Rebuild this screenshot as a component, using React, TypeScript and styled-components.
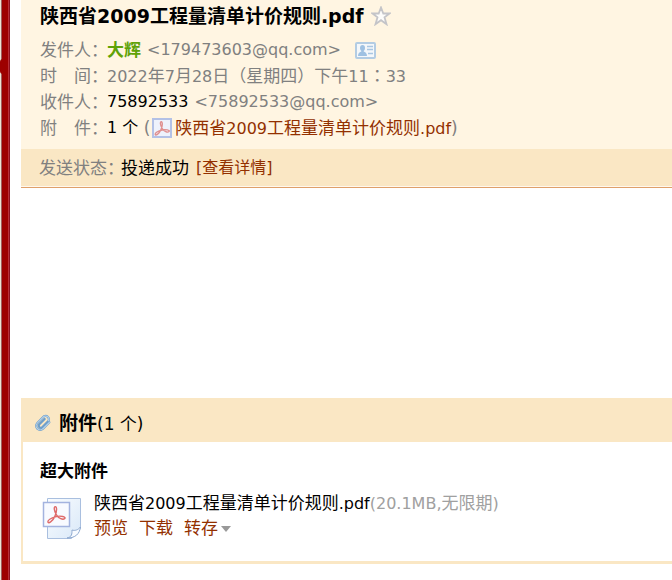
import React from "react";
import styled, { createGlobalStyle } from "styled-components";

const GlobalStyle = createGlobalStyle`
  * { box-sizing: border-box; }
  body {
    margin: 0;
    background: #fff;
    color: #000;
    font: 17px/26px "DejaVu Sans", "Noto Sans CJK SC", sans-serif;
  }
`;

const Page = styled.div`
  display: grid;
  grid-template-columns: 10px minmax(0, 1fr);
  column-gap: 11px;
  min-height: 100vh;
`;

const Spine = styled.div`
  position: relative;
  background: linear-gradient(to right, #ede3d3 1px, #a06060 1px, #a06060 2px, #9d0000 2px, #9d0000 8px, #b83038 8px, #b83038 9px, #8c1020 9px);
`;

const Knot = styled.span`
  position: absolute;
  left: 0;
  top: 59px;
  width: 3px;
  height: 15px;
  background: #9d0000;
  border-radius: 3px 0 0 3px;
`;

const Mail = styled.main`
  white-space: nowrap;
  overflow: hidden;
`;

const Summary = styled.header`
  background: #fff5e2;
  padding: 3px 19px 8px;
`;

const Subject = styled.div`
  display: flex;
  align-items: center;
  gap: 7px;
  height: 26px;
  margin-bottom: 8px;
`;

const Title = styled.h1`
  margin: 0;
  font-size: 19px;
  line-height: 26px;
`;

const IconButton = styled.button`
  display: inline-flex;
  padding: 0;
  border: 0;
  background: none;
  cursor: pointer;
`;

const Fields = styled.dl`
  margin: 0;
`;

const Field = styled.div`
  display: flex;
  height: 26px;
`;

const Label = styled.dt`
  width: 67px;
  flex: none;
  color: #808080;
`;

const Value = styled.dd<{ $muted?: boolean }>`
  display: flex;
  align-items: center;
  margin: 0;
  color: ${(p) => (p.$muted ? "#808080" : "#000")};
`;

const Latin = styled.span`
  font-size: 16px;
`;

const Colon = styled.span`
  font-family: "Noto Sans CJK TC", sans-serif;
`;

const Sender = styled.b`
  color: #5fa207;
`;

const Address = styled.span`
  margin: 0 14px 0 6px;
  font-size: 16px;
  color: #808080;
`;

const Paren = styled.span`
  color: #808080;
`;

const Link = styled.a`
  color: #933000;
  text-decoration: none;
`;

const FileLink = styled(Link)`
  display: flex;
  align-items: center;
  gap: 3px;
  margin-left: 2px;
`;

const Status = styled.div`
  display: flex;
  height: 39px;
  padding: 6px 18px;
  background: #fae7c4;
  border-bottom: 1px solid #dfa06a;
  box-shadow: inset 0 -1px #fff8ee;
`;

const StatusLabel = styled.span`
  width: 82px;
  color: #808080;
`;

const DetailLink = styled(Link)`
  margin-left: 7px;
  font-size: 16px;
`;

const MessageBody = styled.div`
  height: 210px;
`;

const Attachments = styled.section`
  border: solid #fae7c4;
  border-width: 0 0 3px 2px;
`;

const AttachmentsHead = styled.header`
  display: flex;
  align-items: center;
  gap: 6px;
  height: 44px;
  padding: 6px 10px 0;
  background: #fae7c4;
`;

const HeadText = styled.h2`
  margin: 0;
  font-size: 19px;
  font-weight: bold;
`;

const Count = styled.span`
  font-size: 17px;
  font-weight: normal;
`;

const AttachmentsBody = styled.div`
  padding: 16px 17px 20px;
`;

const GroupTitle = styled.h3`
  margin: 0 0 7px;
  font-size: 17px;
`;

const FileRow = styled.div`
  display: flex;
  gap: 12px;
`;

const FileIcon = styled.div`
  display: flex;
  padding: 6px 0 0 2px;
`;

const FileInfo = styled.div`
  line-height: 25px;
`;

const Muted = styled.span`
  color: #a0a0a0;
`;

const Actions = styled.div`
  display: flex;
  gap: 11px;
`;

const MenuButton = styled(IconButton)`
  align-items: center;
  gap: 3px;
  color: #933000;
  font: inherit;
`;

const StarIcon = () => (
  <svg width="20" height="20" viewBox="0 0 20 20" aria-hidden="true">
    <path d="M10 1.500l2.300 6h6.200l-5 3.800 2 6.900-5.500-4-5.500 4 2-6.900-5-3.800h6.200z" fill="#fdfcfa" stroke="#c4c4c8" strokeWidth="1.800" />
  </svg>
);

const CardIcon = () => (
  <svg width="21" height="17" viewBox="0 0 21 17" aria-hidden="true">
    <rect x="1" y="1" width="19" height="15" rx="1" fill="#f4f7fa" stroke="#b3cce3" strokeWidth="2" />
    <ellipse cx="7.500" cy="6" rx="2.500" ry="3" fill="#9fc1e2" />
    <path d="M3 14c0-3 2-4 3.300-4.500v-2h2.400v2C10 10 12 11 12 14z" fill="#9fc1e2" />
    <path d="M12 4.500h6M12 7.500h6M13 11.500h5" stroke="#a9c6e2" strokeWidth="1.300" />
  </svg>
);

const acrobat =
  "M9.300 3.800C7.800 3.800 8.300 7.500 10.200 10.500S15.500 15 17 13.600 13.500 11 10 12 3 14.800 3.200 16.400 7 16.200 8.900 11.800 10.600 3.800 9.300 3.800z";

const PdfSmallIcon = () => (
  <svg width="20" height="20" viewBox="0 0 20 20" aria-hidden="true">
    <rect x="1" y="1" width="18" height="18" fill="#eef2fc" stroke="#b3c1e6" strokeWidth="2" />
    <path d={acrobat} fill="none" stroke="#e09090" strokeWidth="1.400" />
  </svg>
);

const PdfLargeIcon = () => (
  <svg width="40" height="43" viewBox="0 0 40 43" aria-hidden="true">
    <defs>
      <linearGradient id="sheet" x1="0" y1="0" x2="1" y2="1">
        <stop offset="0" stopColor="#fafdff" />
        <stop offset="1" stopColor="#d9e8f8" />
      </linearGradient>
    </defs>
    <path d="M5.500 1.500h33v30l-9 10h-24z" fill="url(#sheet)" stroke="#a9bfdf" />
    <path d="M25 41c5-1 5-4 5-8 3 1 6 0 8.500-3-1 7-5 11-13.500 11z" fill="#f8fbff" stroke="#8faad0" />
    <rect x="1.500" y="5.500" width="26" height="24" fill="#f8faff" stroke="#a3b3df" strokeWidth="1.500" />
    <path transform="translate(2 5) scale(1.220)" d={acrobat} fill="none" stroke="#df6a6a" strokeWidth="1.150" />
  </svg>
);

const ClipIcon = () => (
  <svg width="20" height="20" viewBox="0 0 20 20" fill="none" strokeLinecap="round" aria-hidden="true">
    <g transform="rotate(45 10 10)">
      <path d="M14 5v9a4 4 0 0 1-8 0V4.500a3.400 3.400 0 0 1 6.400 0V13.500a2 2 0 0 1-4 0V6" stroke="#6f9fca" strokeWidth="2.200" />
      <path d="M14 5v9a4 4 0 0 1-8 0V4.500a3.400 3.400 0 0 1 6.400 0" stroke="#bcd7ee" strokeWidth="1" />
    </g>
  </svg>
);

const CaretIcon = () => (
  <svg width="10" height="6" viewBox="0 0 10 6" aria-hidden="true">
    <path d="M0 0h10L5 6z" fill="#999" />
  </svg>
);

const FileName = () => (
  <span>
    陕西省<Latin>2009</Latin>工程量清单计价规则<Latin>.pdf</Latin>
  </span>
);

export default function App() {
  return (
    <Page lang="zh-CN">
      <GlobalStyle />
      <Spine>
        <Knot />
      </Spine>
      <Mail>
        <Summary>
          <Subject>
            <Title>陕西省2009工程量清单计价规则.pdf</Title>
            <IconButton type="button" aria-label="星标">
              <StarIcon />
            </IconButton>
          </Subject>
          <Fields>
            <Field>
              <Label>发件人：</Label>
              <Value>
                <Sender>大辉</Sender>
                <Address>&lt;179473603@qq.com&gt;</Address>
                <IconButton type="button" aria-label="联系人">
                  <CardIcon />
                </IconButton>
              </Value>
            </Field>
            <Field>
              <Label>时　间：</Label>
              <Value $muted>
                <span>
                  <Latin>2022</Latin>年<Latin>7</Latin>月<Latin>28</Latin>日（星期四）下午<Latin>11</Latin>
                  <Colon lang="zh-TW">：</Colon>
                  <Latin>33</Latin>
                </span>
              </Value>
            </Field>
            <Field>
              <Label>收件人：</Label>
              <Value>
                <Latin>75892533</Latin>
                <Address>&lt;75892533@qq.com&gt;</Address>
              </Value>
            </Field>
            <Field>
              <Label>附　件：</Label>
              <Value>
                <Latin>1 个</Latin>
                <Paren>&nbsp;(</Paren>
                <FileLink href="#attachment">
                  <PdfSmallIcon />
                  <FileName />
                </FileLink>
                <Paren>)</Paren>
              </Value>
            </Field>
          </Fields>
        </Summary>
        <Status>
          <StatusLabel>发送状态：</StatusLabel>
          <span>投递成功</span>
          <DetailLink href="#status">[查看详情]</DetailLink>
        </Status>
        <MessageBody />
        <Attachments id="attachment">
          <AttachmentsHead>
            <ClipIcon />
            <HeadText>
              附件<Count>(1 个)</Count>
            </HeadText>
          </AttachmentsHead>
          <AttachmentsBody>
            <GroupTitle>超大附件</GroupTitle>
            <FileRow>
              <FileIcon>
                <PdfLargeIcon />
              </FileIcon>
              <FileInfo>
                <div>
                  <FileName />
                  <Muted>
                    <Latin>(20.1MB,</Latin>无限期<Latin>)</Latin>
                  </Muted>
                </div>
                <Actions>
                  <Link href="#preview">预览</Link>
                  <Link href="#download">下载</Link>
                  <MenuButton type="button">
                    转存
                    <CaretIcon />
                  </MenuButton>
                </Actions>
              </FileInfo>
            </FileRow>
          </AttachmentsBody>
        </Attachments>
      </Mail>
    </Page>
  );
}
